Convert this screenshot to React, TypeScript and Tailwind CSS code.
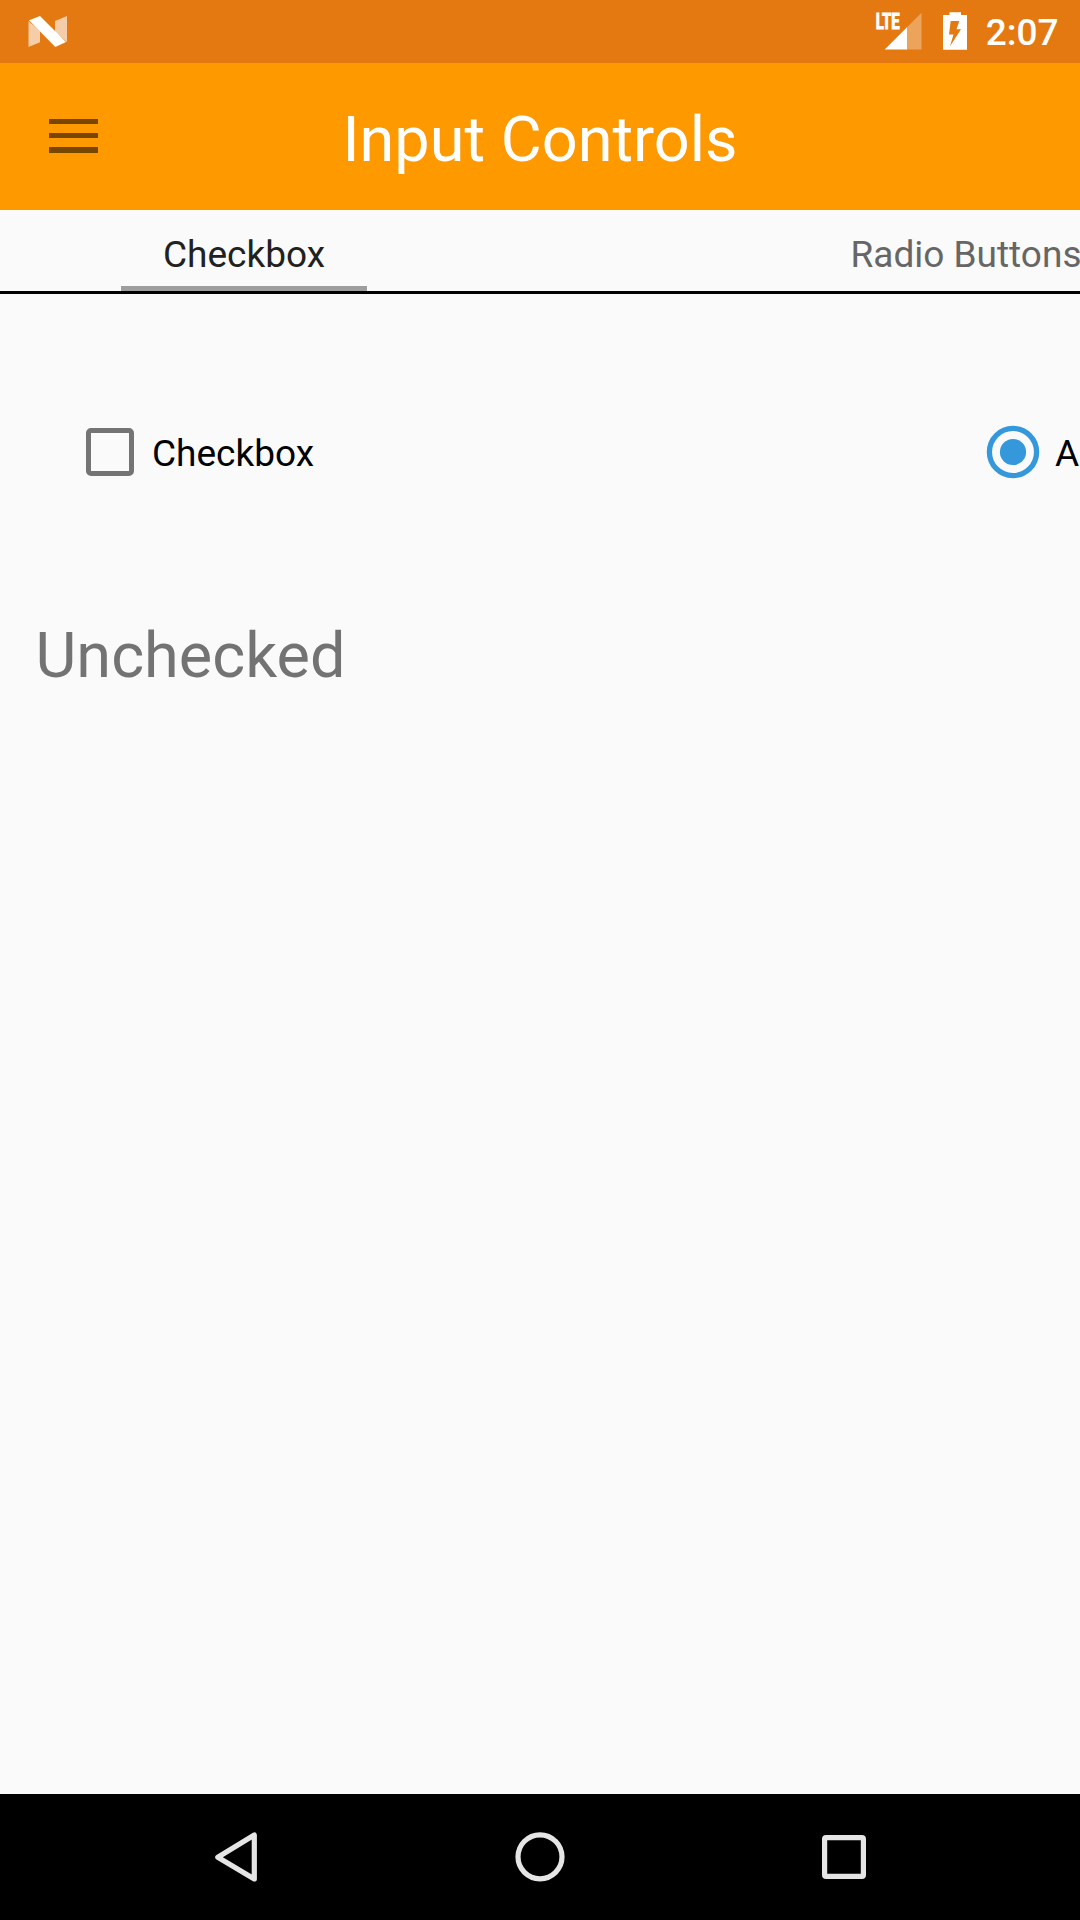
import React from "react";

function StatusBar() {
  return (
    <div className="flex h-[63px] shrink-0 items-center justify-between bg-[#e47911] pl-6 pr-[21.5px]">
      <svg width="48" height="63" viewBox="24 0 48 63">
        <path d="M28.5 21 40 31V42.3L28.5 47ZM55 21 67 16V42L55 32Z" fill="#f5cda8" />
        <path d="M29 20.3 40 16 66 42 55.3 47Z" fill="#fff" />
      </svg>
      <div className="flex items-center">
        <svg width="110" height="63" viewBox="870 0 110 63">
          <path d="M921.5 12.7V49.5H906V28.2Z" fill="#eca35b" />
          <path d="M907 27.2V49.5H884.7Z" fill="#fff" />
          <text x="875.7" y="29" fontSize="22" fontWeight="700" fill="#fff" stroke="#fff" strokeWidth="1.1" textLength="24" lengthAdjust="spacingAndGlyphs" className="font-['Roboto',sans-serif]">LTE</text>
          <path d="M949.5 12.3H961V15H967V49.8H943V15H949.5Z" fill="#fff" />
          <path d="M950.7 21H959.3L956.5 29.3H961L950 46.3L953.5 34.5H949Z" fill="#e47911" />
        </svg>
        <span className="pl-[5.5px] pt-[2px] text-[37px] font-medium leading-[66px] text-white">2:07</span>
      </div>
    </div>
  );
}

function AppBar() {
  return (
    <header className="grid h-[147px] shrink-0 grid-cols-[146px_1fr_146px] items-center bg-[#ff9900]">
      <button aria-label="Menu" className="flex flex-col gap-[8.75px] pb-[2px] pl-[48.5px]">
        <span className="h-[5.5px] w-[49px] bg-[#774700]" />
        <span className="h-[5.5px] w-[49px] bg-[#774700]" />
        <span className="h-[5.5px] w-[49px] bg-[#774700]" />
      </button>
      <h1 className="pt-[6px] text-center text-[63px] leading-[74px] text-white">Input Controls</h1>
    </header>
  );
}

function Tabs() {
  return (
    <nav className="flex h-[84px] shrink-0 justify-between border-b-[3px] border-black text-[37px] leading-[43px]">
      <div className="ml-[121px] flex w-[246px] flex-col justify-end border-b-[5px] border-[#9e9e9e] pb-[10px] text-center text-[#212121]">
        Checkbox
      </div>
      <div className="-mr-[1.5px] flex flex-col justify-end whitespace-nowrap pb-[15px] text-[#666666]">Radio Buttons</div>
    </nav>
  );
}

function Controls() {
  return (
    <main className="flex grow flex-col text-[37px] leading-[43px] text-black">
      <div className="mt-[134px] flex h-12 items-center justify-between">
        <label className="flex items-center pl-[86px]">
          <span className="size-12 rounded-[5px] border-[5px] border-[#747474]" />
          <span className="pl-[18px] pt-[2px]">Checkbox</span>
        </label>
        <label className="flex w-[94px] items-center overflow-visible">
          <svg width="54" height="54" viewBox="0 0 54 54" className="shrink-0">
            <circle cx="27" cy="27" r="23.6" fill="none" stroke="#3498db" strokeWidth="5.3" />
            <circle cx="27" cy="27" r="13.1" fill="#3498db" />
          </svg>
          <span className="pl-[15px] pt-[2px]">A</span>
        </label>
      </div>
      <p className="mt-[143px] pl-[35.5px] text-[63px] leading-[74px] text-[#737373]">Unchecked</p>
    </main>
  );
}

function NavigationBar() {
  return (
    <footer className="flex h-[126px] shrink-0 items-center justify-center bg-black">
      <svg width="1080" height="126" viewBox="0 1794 1080 126" fill="none" stroke="#e5e5e5" strokeWidth="5.2" strokeLinejoin="round">
        <path d="M217.8 1857.2 254.3 1835V1879Z" />
        <circle cx="540" cy="1856.8" r="22" />
        <rect x="824.6" y="1837.6" width="38.8" height="38.8" rx="1.5" />
      </svg>
    </footer>
  );
}

export default function App() {
  return (
    <div className="flex h-[1920px] w-[1080px] flex-col overflow-hidden bg-[#fafafa] font-['Roboto',sans-serif]">
      <StatusBar />
      <AppBar />
      <Tabs />
      <Controls />
      <NavigationBar />
    </div>
  );
}
